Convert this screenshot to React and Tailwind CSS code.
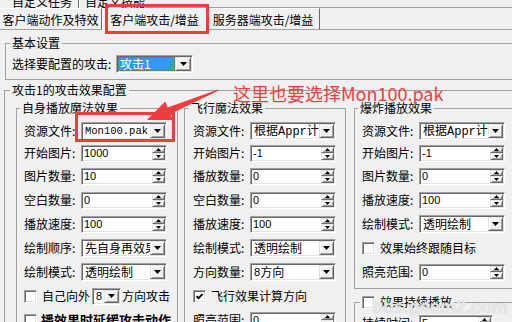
// 攻击效果配置窗口的截图复刻。经典 Windows 对话框风格，红色标注叠在上面。
import React from "react";

const sunken =
  "border border-t-[#a0a0a0] border-l-[#a0a0a0] border-r-white border-b-white shadow-[inset_1px_1px_0_#696969,inset_-1px_-1px_0_#e3e3e3] bg-white";
const raised =
  "border border-t-[#e3e3e3] border-l-[#e3e3e3] border-r-[#696969] border-b-[#696969] shadow-[inset_1px_1px_0_#fff,inset_-1px_-1px_0_#a0a0a0] bg-[#f0f0f0]";

function DownTri() {
  return (
    <svg width="7" height="4" viewBox="0 0 7 4">
      <path d="M0 0h7l-3.5 4z" fill="#000" />
    </svg>
  );
}

// 下拉框
function Combo({ children, w = "w-[86px]", h = "h-[18px]" }) {
  return (
    <div className={`flex shrink-0 p-px ${w} ${h} ${sunken}`}>
      <div className="flex flex-1 items-center overflow-hidden whitespace-nowrap pl-[2px]">{children}</div>
      <div className={`flex w-[15px] shrink-0 items-center justify-center ${raised}`}>
        <DownTri />
      </div>
    </div>
  );
}

// 带上下箭头的数字框
function Spin({ value, w = "w-[86px]" }) {
  return (
    <div className={`flex h-[17px] shrink-0 p-px ${w} ${sunken}`}>
      <div className="flex-1 overflow-hidden pl-px font-['Liberation_Sans',sans-serif] text-[11px] leading-[13px]">
        {value}
      </div>
      <div className="flex w-[13px] shrink-0 flex-col">
        <div className={`flex flex-1 items-center justify-center ${raised}`}>
          <svg width="5" height="3" viewBox="0 0 5 3">
            <path d="M2.5 0L5 3H0z" fill="#000" />
          </svg>
        </div>
        <div className={`flex flex-1 items-center justify-center ${raised}`}>
          <svg width="5" height="3" viewBox="0 0 5 3">
            <path d="M0 0h5L2.5 3z" fill="#000" />
          </svg>
        </div>
      </div>
    </div>
  );
}

function Check({ checked }) {
  return (
    <span className={`flex h-[13px] w-[13px] shrink-0 items-center justify-center ${sunken}`}>
      {checked && (
        <svg width="9" height="9" viewBox="0 0 9 9">
          <path d="M1.5 4.2l2 2 4-4" fill="none" stroke="#000" strokeWidth="1.7" />
        </svg>
      )}
    </span>
  );
}

function Row({ label, h = "h-[24px]", children }) {
  return (
    <div className={`flex items-center ${h}`}>
      <span className="w-[57px] shrink-0 whitespace-nowrap">{label}</span>
      {children}
    </div>
  );
}

function CheckRow({ label, checked, bold }) {
  return (
    <div className="flex h-[24px] items-center">
      <Check checked={checked} />
      <span className={bold ? "ml-[4px] whitespace-nowrap text-[13px] font-bold" : "ml-[5px] whitespace-nowrap"}>
        {label}
      </span>
    </div>
  );
}

const mono = "font-['Liberation_Mono',monospace]";

function ApprText() {
  return (
    <span>
      根据<span className={`${mono} text-[12px]`}>Appr</span>计算
    </span>
  );
}

export default function App() {
  return (
    <div className="relative h-[322px] w-[512px] overflow-hidden bg-[#f0f0f0] font-['Noto_Sans_CJK_SC',sans-serif] text-[12px] leading-[14px] text-black">
      {/* 第一排标签，只露出下半截 */}
      <div className="flex h-[8px] overflow-hidden">
        <div className="w-[79px] border-r border-r-[#696969] pl-[12px]">
          <div className="-mt-[5px]">自定义任务</div>
        </div>
        <div className="w-[66px] border-l border-l-white pl-[5px]">
          <div className="-mt-[5px]">自定义技能</div>
        </div>
        <div className="flex-1 border-b border-b-[#a0a0a0]"></div>
      </div>

      {/* 第二排标签 */}
      <div className="flex h-[22px]">
        <div className="w-[102px] border-t border-r border-b border-t-white border-r-[#696969] border-b-[#a0a0a0] pt-[4px] text-center">
          客户端动作及特效
        </div>
        <div className="w-[105px] border-t border-l border-r border-t-white border-l-white border-r-[#696969] pt-[4px] text-center">
          客户端攻击/增益
        </div>
        <div className="w-[113px] border-t border-r border-b border-t-white border-r-[#696969] border-b-[#a0a0a0] pt-[4px] text-center">
          服务器端攻击/增益
        </div>
        <div className="flex-1 border-b border-b-[#a0a0a0]"></div>
      </div>

      {/* 基本设置 */}
      <fieldset className="ml-[5px] mt-[6px] w-[520px] min-w-0 border border-[#a0a0a0] pb-[6px] pl-[6px] pt-[5px]">
        <legend className="-ml-[2px] px-[2px]">基本设置</legend>
        <div className="flex items-center">
          <span className="w-[104px] shrink-0 whitespace-nowrap">选择要配置的攻击:</span>
          <div className={`flex h-[18px] w-[77px] p-px ${sunken}`}>
            <div className="flex flex-1 items-center border border-dotted border-[#8a6a3a] bg-[#3399ff] pl-px text-white">
              攻击1
            </div>
            <div className={`flex w-[16px] shrink-0 items-center justify-center ${raised}`}>
              <DownTri />
            </div>
          </div>
        </div>
      </fieldset>

      {/* 攻击效果配置 */}
      <fieldset className="ml-[4px] mt-[3px] w-[530px] min-w-0 border border-[#a0a0a0] pl-[11px] pt-[4px]">
        <legend className="-ml-[6px] px-[2px]">攻击1的攻击效果配置</legend>
        <div className="flex items-start">
          {/* 自身播放 */}
          <fieldset className="w-[162px] min-w-0 shrink-0 border border-[#a0a0a0] pl-[7px] pt-[4px]">
            <legend className="-ml-[4px] px-[2px]">自身播放魔法效果</legend>
            <Row label="资源文件:" h="h-[23px]">
              <Combo>
                <span className={`${mono} text-[10.5px]`}>Mon100.pak</span>
              </Combo>
            </Row>
            <Row label="开始图片:" h="h-[22px]">
              <Spin value="1000" />
            </Row>
            <Row label="图片数量:">
              <Spin value="10" />
            </Row>
            <Row label="空白数量:">
              <Spin value="0" />
            </Row>
            <Row label="播放速度:">
              <Spin value="100" />
            </Row>
            <Row label="绘制顺序:">
              <Combo>先自身再效果</Combo>
            </Row>
            <Row label="绘制模式:">
              <Combo>透明绘制</Combo>
            </Row>
            <div className="flex h-[24px] items-center">
              <Check />
              <span className="ml-[5px] whitespace-nowrap">自己向外</span>
              <div className="ml-[2px]">
                <Combo w="w-[29px]" h="h-[17px]">
                  <span className="font-['Liberation_Sans',sans-serif] text-[11px]">8</span>
                </Combo>
              </div>
              <span className="ml-px whitespace-nowrap">方向攻击</span>
            </div>
            <CheckRow label="播效果时延缓攻击动作" bold />
          </fieldset>

          {/* 飞行魔法 */}
          <fieldset className="ml-[6px] w-[162px] min-w-0 shrink-0 border border-[#a0a0a0] pl-[8px] pt-[4px]">
            <legend className="-ml-[4px] px-[2px]">飞行魔法效果</legend>
            <Row label="资源文件:" h="h-[23px]">
              <Combo>
                <ApprText />
              </Combo>
            </Row>
            <Row label="开始图片:" h="h-[22px]">
              <Spin value="-1" />
            </Row>
            <Row label="播放数量:">
              <Spin value="0" />
            </Row>
            <Row label="空白数量:">
              <Spin value="0" />
            </Row>
            <Row label="播放速度:">
              <Spin value="100" />
            </Row>
            <Row label="绘制模式:">
              <Combo>透明绘制</Combo>
            </Row>
            <Row label="方向数量:">
              <Combo>
                <span className="font-['Liberation_Sans',sans-serif] text-[11px]">8</span>方向
              </Combo>
            </Row>
            <CheckRow label="飞行效果计算方向" checked />
            <Row label="照亮范围:">
              <Spin value="0" />
            </Row>
          </fieldset>

          {/* 爆炸播放 */}
          <div className="ml-[8px] w-[162px] shrink-0">
            <fieldset className="min-w-0 border border-[#a0a0a0] pb-[4px] pl-[7px] pt-[4px]">
              <legend className="-ml-[4px] px-[2px]">爆炸播放效果</legend>
              <Row label="资源文件:" h="h-[23px]">
                <Combo>
                  <ApprText />
                </Combo>
              </Row>
              <Row label="开始图片:" h="h-[22px]">
                <Spin value="-1" />
              </Row>
              <Row label="图片数量:">
                <Spin value="0" />
              </Row>
              <Row label="播放速度:">
                <Spin value="100" />
              </Row>
              <Row label="绘制模式:">
                <Combo>透明绘制</Combo>
              </Row>
              <CheckRow label="效果始终跟随目标" />
              <Row label="照亮范围:">
                <Spin value="0" />
              </Row>
            </fieldset>
            <fieldset className="mt-[6px] min-w-0 border border-[#a0a0a0] pl-[7px] pt-[2px]">
              <legend className="-ml-[2px] flex items-center px-[2px]">
                <Check />
                <span className="ml-[5px]">效果持续播放</span>
              </legend>
              <Row label="持续时间:">
                <Spin value="5" w="w-[74px]" />
              </Row>
            </fieldset>
          </div>
        </div>
      </fieldset>

      {/* 红色标注 */}
      <div className="pointer-events-none absolute left-[105px] top-[4px] h-[30px] w-[104px] border-[3px] border-[#f03c3c]"></div>
      <div className="pointer-events-none absolute left-[75px] top-[112px] h-[30px] w-[100px] border-[3px] border-[#f03c3c]"></div>
      <svg className="pointer-events-none absolute left-0 top-0" width="512" height="322">
        <polygon
          points="147,120 165.2,101.5 167.7,107.5 218,89.5 218.5,90.5 170.5,113.9 173,119.9"
          fill="#f03c3c"
        />
      </svg>
      <div className="pointer-events-none absolute left-[233px] top-[83px] whitespace-nowrap text-[18px] leading-[20px] text-[#f23d3d]">
        这里也要选择Mon100.pak
      </div>

      {/* 水印 */}
      <div className="pointer-events-none absolute left-[372px] top-[297px] whitespace-nowrap font-['Liberation_Sans',sans-serif] text-[18px] font-bold leading-[20px] text-white/70 [text-shadow:0_0_1px_#b0b0b0]">
        bbs.geem2.com
      </div>
    </div>
  );
}
